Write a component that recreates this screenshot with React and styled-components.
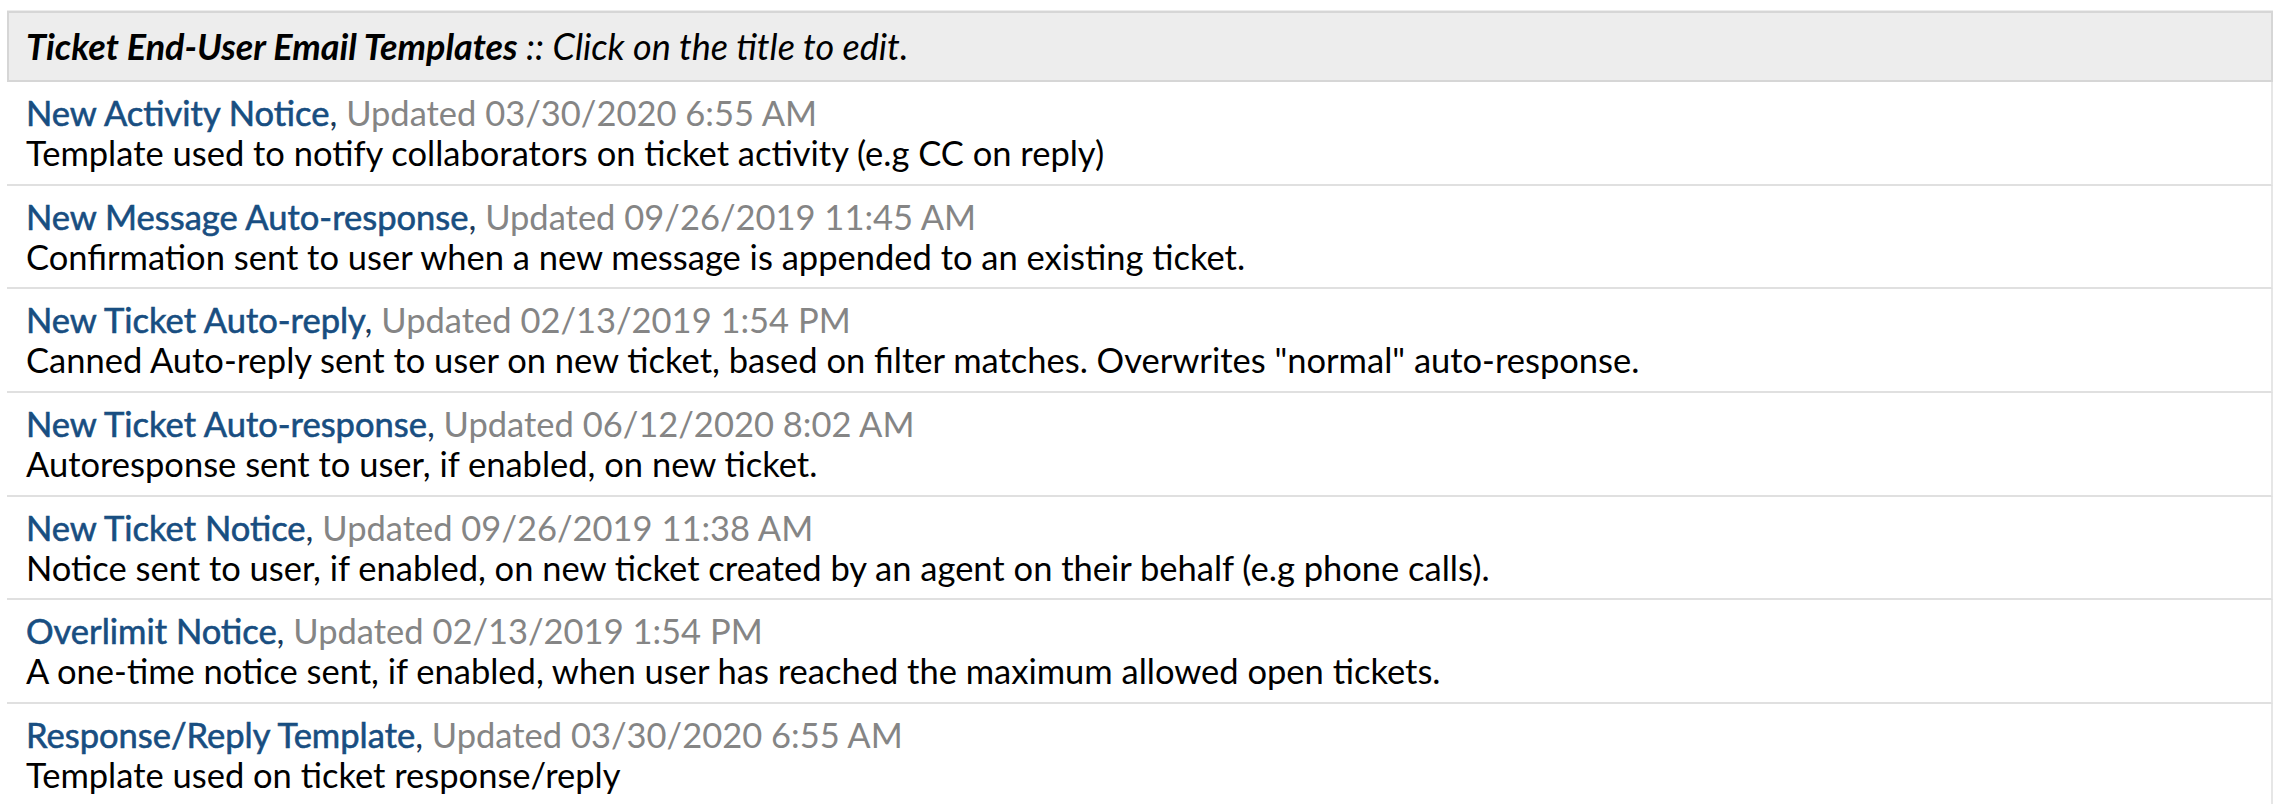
import React from "react";
import styled, { createGlobalStyle } from "styled-components";

const Global = createGlobalStyle`
  html, body { margin: 0; padding: 0; background: #fff; }
  body { font-family: Lato, "Open Sans", sans-serif; }
`;

const Page = styled.div`
  padding: 10px 1px 0 7px;
`;

const List = styled.div`
  display: flex;
  flex-direction: column;
  border-top: 1px solid #ececec;
`;

const Header = styled.div`
  background: #ededed;
  border: 2px solid #d6d6d6;
  padding: 13px 17px 14px;
  font-size: 36px;
  line-height: 40px;
  font-style: italic;
  color: #000;
  white-space: nowrap;
`;

const Strong = styled.b`
  font-weight: 700;
`;

const Row = styled.div`
  padding: 11px 19px 10.7px;
  border-bottom: 2px solid #e0e0e0;
  border-right: 2px solid #e6e6e6;
  font-size: 34.5px;
  line-height: 40px;
  white-space: nowrap;
  &:last-child { border-bottom: none; }
`;

const TitleLine = styled.div`
  color: #858585;
`;

const Title = styled.a`
  color: #184e81;
  text-decoration: none;
  cursor: pointer;
  -webkit-text-stroke: 0.6px #184e81;
`;

const Comma = styled.span`
  color: #1c3a5a;
`;

const Desc = styled.div`
  color: #000;
`;

const rows = [
  ["New Activity Notice", "03/30/2020 6:55 AM", "Template used to notify collaborators on ticket activity (e.g CC on reply)"],
  ["New Message Auto-response", "09/26/2019 11:45 AM", "Confirmation sent to user when a new message is appended to an existing ticket."],
  ["New Ticket Auto-reply", "02/13/2019 1:54 PM", "Canned Auto-reply sent to user on new ticket, based on filter matches. Overwrites \"normal\" auto-response."],
  ["New Ticket Auto-response", "06/12/2020 8:02 AM", "Autoresponse sent to user, if enabled, on new ticket."],
  ["New Ticket Notice", "09/26/2019 11:38 AM", "Notice sent to user, if enabled, on new ticket created by an agent on their behalf (e.g phone calls)."],
  ["Overlimit Notice", "02/13/2019 1:54 PM", "A one-time notice sent, if enabled, when user has reached the maximum allowed open tickets."],
  ["Response/Reply Template", "03/30/2020 6:55 AM", "Template used on ticket response/reply"],
];

export default function App() {
  return (
    <Page>
      <Global />
      <List>
        <Header>
          <Strong>Ticket End-User Email Templates</Strong> :: Click on the title to edit.
        </Header>
        {rows.map(([t, d, desc]) => (
          <Row key={t}>
            <TitleLine>
              <Title>{t}</Title><Comma>,</Comma> Updated {d}
            </TitleLine>
            <Desc>{desc}</Desc>
          </Row>
        ))}
      </List>
    </Page>
  );
}
